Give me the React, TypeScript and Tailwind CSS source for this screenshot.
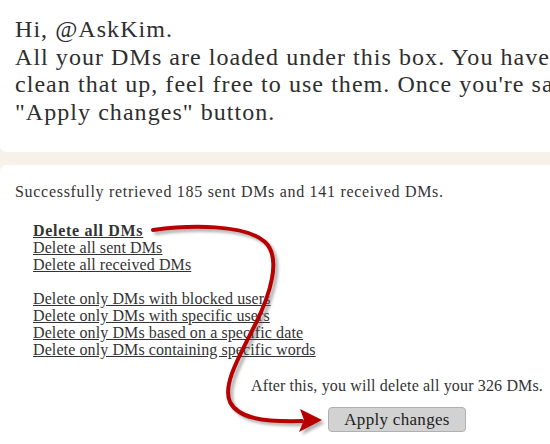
import React from 'react';

const links = [
  'Delete all sent DMs',
  'Delete all received DMs',
];

const filters = [
  'Delete only DMs with blocked users',
  'Delete only DMs with specific users',
  'Delete only DMs based on a specific date',
  'Delete only DMs containing specific words',
];

function Arrow() {
  const d = 'M153,230 C190,225 245,224 265,242 C282,258 270,295 255,325 C240,355 222,385 230,402 C238,418 262,422 302,421';
  return (
    <svg className="pointer-events-none absolute left-0 top-0" width="550" height="444" viewBox="0 0 550 444">
      <defs>
        <filter id="blur" x="-10%" y="-10%" width="120%" height="120%">
          <feGaussianBlur stdDeviation="1.5" />
        </filter>
      </defs>
      <g transform="translate(3,3)" filter="url(#blur)" opacity="0.45">
        <path d={d} fill="none" stroke="#555" strokeWidth="4" strokeLinecap="round" />
        <polygon points="322,420 300,409 304,420 299,432" fill="#555" />
      </g>
      <path d={d} fill="none" stroke="#b80000" strokeWidth="4" strokeLinecap="round" />
      <polygon points="322,420 300,409 304,420 299,432" fill="#b80000" />
    </svg>
  );
}

export default function App() {
  return (
    <div className="relative h-[444px] w-[550px] overflow-hidden bg-[#f8f1ea] font-['Liberation_Serif',serif] text-[#333]">
      <div className="h-[152px] w-[600px] rounded-b-md bg-white pl-[15px] pt-[16px]">
        <p className="whitespace-nowrap text-[24px] leading-[27.5px] tracking-[1.05px] text-[#2e2e2e]">
          Hi, @AskKim.
          <br />
          All your DMs are loaded under this box. You have several options to
          <br />
          clean that up, feel free to use them. Once you're satisfied, click on the
          <br />
          "Apply changes" button.
        </p>
      </div>
      <div className="mt-[13px] h-[300px] w-[600px] rounded-t-md bg-white pl-[15px] pt-[18px] text-[16px] leading-[17px] tracking-[0.1px]">
        <p className="tracking-[0.7px]">Successfully retrieved 185 sent DMs and 141 received DMs.</p>
        <div className="mt-[22px] flex flex-col items-start pl-[18px]">
          <a className="font-bold tracking-[0.7px] underline">Delete all DMs</a>
          {links.map((l) => (
            <a key={l} className="underline">{l}</a>
          ))}
          <div className="h-[17px]" />
          {filters.map((l) => (
            <a key={l} className="underline">{l}</a>
          ))}
        </div>
        <div className="flex w-[528px] flex-col items-end">
          <p className="mt-[19px] tracking-[0.15px]">After this, you will delete all your 326 DMs.</p>
        </div>
        <div className="mt-[13px] w-[528px] pl-[313px]">
          <button className="h-[25px] w-[138px] rounded-[4px] border border-[#b0b0b0] bg-[#d2d2d2] text-[17px] leading-[23px] tracking-[0.3px] text-[#222]">
            Apply changes
          </button>
        </div>
      </div>
      <Arrow />
    </div>
  );
}
